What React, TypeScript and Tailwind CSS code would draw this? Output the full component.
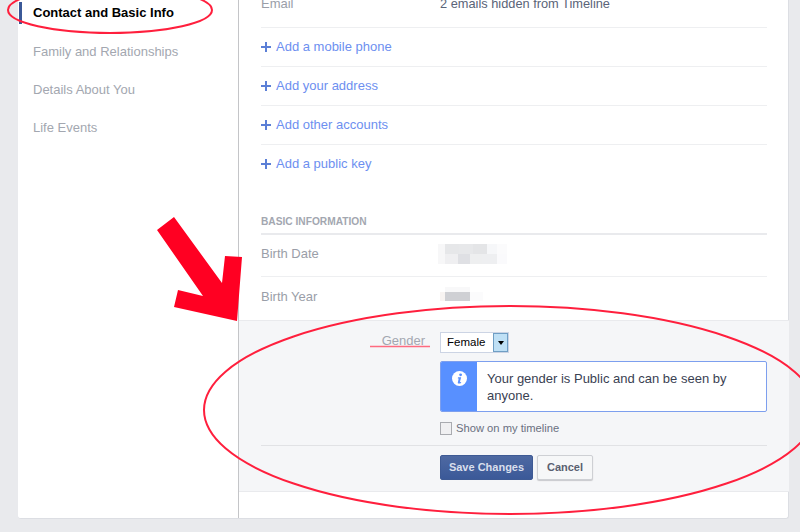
import React from 'react';

const ADD_LINKS = ['Add a mobile phone', 'Add your address', 'Add other accounts', 'Add a public key'];
const SIDE_LINKS = ['Family and Relationships', 'Details About You', 'Life Events'];

const BIRTH_DATE_CELLS = [
  [['#f7f7f8', 7], ['#e6e7e9', 14], ['#e7e8ea', 14], ['#e4e5e7', 14], ['#f6f7f9', 10], ['#fbfbfc', 10]],
  [['#f7f7f8', 7], ['#efeff1', 13], ['#dfe0e4', 12], ['#eeeff0', 12], ['#eeeff1', 15], ['#fafafc', 10]],
] as [string, number][][];

const Plus = () => (
  <svg width="10" height="10" viewBox="0 0 10 10" className="shrink-0">
    <path d="M4 0h2v4h4v2H6v4H4V6H0V4h4z" fill="#5b7fd6" />
  </svg>
);

const App: React.FC = () => {
  return (
    <div className="relative h-[532px] w-[800px] overflow-hidden bg-[#e9eaed] font-['Liberation_Sans',Arial,sans-serif] text-[13px]">
      <div className="ml-[18px] flex h-[519px] w-[771px] rounded-b-[3px] border-r border-b border-[#dcdee3] bg-white">
        {/* Left nav */}
        <div className="w-[221px] shrink-0 border-r border-[#c4c5c8] pl-[1px]">
          <div className="flex h-[33px] items-center">
            <div className="mt-[-7px] h-[22px] w-[3px] bg-[#3b5998]" />
            <span className="mt-[-7px] pl-[11px] font-bold text-black">Contact and Basic Info</span>
          </div>
          {SIDE_LINKS.map((s) => (
            <div key={s} className="flex h-[38px] items-center pl-[14px] text-[#a3a7b0]">{s}</div>
          ))}
        </div>

        {/* Right column */}
        <div className="flex flex-1 flex-col">
          <div className="px-[22px]">
            <div className="flex h-[28px] border-b border-[#eeeff1] leading-[7px] text-[#9a9ea8]">
              <span className="w-[179px]">Email</span>
              <span className="text-[12.8px] text-[#5a6478]">2 emails hidden from Timeline</span>
            </div>
            {ADD_LINKS.map((s, i) => (
              <div key={s} className={i < 3 ? 'flex h-[39px] items-center gap-[5px] border-b border-[#eeeff1] text-[#6d8ff0]' : 'flex h-[39px] items-center gap-[5px] pb-[1px] text-[#6d8ff0]'}>
                <Plus />
                <span>{s}</span>
              </div>
            ))}
            <div className="mt-[31px] border-b-2 border-[#e9eaed] pb-[4px] text-[10.2px] leading-[14px] font-bold text-[#a3a7b0]">
              BASIC INFORMATION
            </div>
            <div className="flex h-[42px] items-start border-b border-[#eeeff1] pt-[9px] text-[#9a9ea8]">
              <span className="w-[177px]">Birth Date</span>
              <div className="flex flex-col">
                {BIRTH_DATE_CELLS.map((row, i) => (
                  <div key={i} className="flex">
                    {row.map(([c, w], j) => (
                      <div key={j} className="h-[10px]" style={{ background: c, width: w }} />
                    ))}
                  </div>
                ))}
              </div>
            </div>
            <div className="flex h-[43px] items-start pt-[10px] text-[#9a9ea8]">
              <span className="w-[179px]">Birth Year</span>
              <div className="flex flex-col">
                <div className="ml-[5px] h-[5px] w-[25px] bg-[#f8f8f9]" />
                <div className="flex h-[9px]">
                  <div className="w-[5px] bg-[#f8f4f2]" />
                  <div className="w-[25px] bg-[#cfd0d4]" />
                  <div className="w-[13px] bg-[#fbfbfc]" />
                </div>
              </div>
            </div>
          </div>

          {/* Edit panel */}
          <div className="h-[172px] border-y border-[#e9eaed] bg-[#f5f6f8] px-[22px]">
            <div className="flex pt-[11px]">
              <div className="mt-[-1px] w-[179px] pr-[15px] text-right text-[#a3a7b0]">Gender</div>
              <div className="w-[327px]">
                <div className="flex h-[21px] w-[69px] items-center justify-between border border-[#ccd4e4] bg-white pl-[6px] text-[11.5px] text-black">
                  <span>Female</span>
                  <div className="flex h-[19px] w-[15px] items-center justify-center border border-[#6f9ec4] bg-[#bfe0f5]">
                    <div className="h-0 w-0 border-x-[3.5px] border-t-[4px] border-x-transparent border-t-black" />
                  </div>
                </div>
                <div className="mt-[8px] flex h-[51px] overflow-hidden rounded-[2px] border border-[#7d9fee] bg-white">
                  <div className="flex w-[36px] shrink-0 justify-center bg-[#5890ff] pt-[9px]">
                    <svg width="15" height="15" viewBox="0 0 15 15">
                      <circle cx="7.5" cy="7.5" r="7.5" fill="#fff" />
                      <circle cx="8.6" cy="3.8" r="1.4" fill="#5890ff" />
                      <path d="M6 6.3h3.2L7.9 11c0 .3.4.3 1.2-.2v1.1c-1.6 1-3.6 1-3.3-.5l.9-4h-.9z" fill="#5890ff" />
                    </svg>
                  </div>
                  <div className="pt-[9px] pl-[10px] leading-[16.5px] text-[#3a4152]">
                    Your gender is Public and can be seen by<br />anyone.
                  </div>
                </div>
                <div className="mt-[9px] flex h-[14px] items-center gap-[4px] text-[11.2px] text-[#6a7080]">
                  <div className="h-[13px] w-[12px] border border-[#a9abb0] bg-[#f0f0f2]" />
                  <span>Show on my timeline</span>
                </div>
              </div>
            </div>
            <div className="mt-[10px] flex gap-[4px] border-t border-[#e1e2e5] pt-[9px] pl-[179px] text-[11px] font-bold">
              <div className="flex h-[25px] w-[93px] items-center justify-center rounded-[2px] border border-[#3e5a94] bg-gradient-to-b from-[#4e69a2] to-[#3b5998] text-[#d9dfec]">
                Save Changes
              </div>
              <div className="flex h-[25px] w-[56px] items-center justify-center rounded-[2px] border border-[#ced0d4] bg-[#f6f7f8] text-[#5a6070] shadow-[0_1px_1px_#c8c9cc]">
                Cancel
              </div>
            </div>
          </div>
        </div>
      </div>

      {/* Red annotations drawn over the page */}
      <svg className="pointer-events-none absolute inset-0" width="800" height="532" viewBox="0 0 800 532">
        <ellipse cx="110" cy="10" rx="102" ry="23" fill="none" stroke="#ff1f3d" strokeWidth="2" />
        <ellipse cx="510" cy="410" rx="306" ry="104" fill="none" stroke="#ff1f3d" strokeWidth="2" />
        <polygon points="157,230 174,217 222,283 225,256 242,257 237,321 174,307 178,290 203,296" fill="#ff0022" />
        <line x1="370" y1="346.5" x2="430" y2="346.5" stroke="#ff6b80" strokeWidth="1.3" />
      </svg>
    </div>
  );
};

export default App;
